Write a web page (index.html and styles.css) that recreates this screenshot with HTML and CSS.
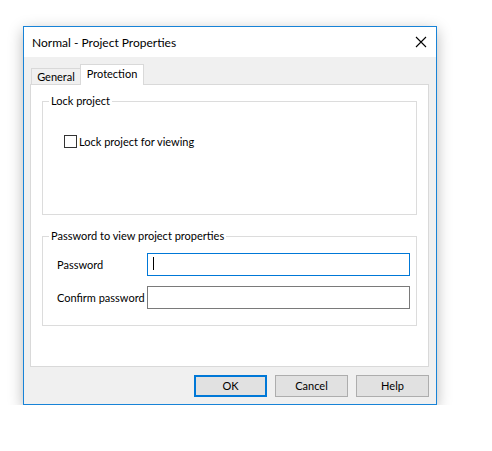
FILE: index.html
```html
<!DOCTYPE html>
<html>
<head>
<meta charset="utf-8">
<link rel="stylesheet" href="styles.css">
</head>
<body>
<div class="window">
  <div class="titlebar">
    <span class="title">Normal - Project Properties</span>
    <svg class="close" width="12" height="12" viewBox="0 0 12 12"><path d="M1 1 L11 11 M11 1 L1 11" stroke="#000" stroke-width="1.1" fill="none"/></svg>
  </div>
  <div class="body">
    <div class="tabs">
      <div class="tab">General</div>
      <div class="tab active">Protection</div>
    </div>
    <div class="panel">
      <fieldset class="group lock">
        <legend>Lock project</legend>
        <label class="check"><span class="box"></span>Lock project for viewing</label>
      </fieldset>
      <fieldset class="group pass">
        <legend>Password to view project properties</legend>
        <div class="row"><span class="lbl">Password</span><div class="input focused"><span class="caret"></span></div></div>
        <div class="row"><span class="lbl">Confirm password</span><div class="input"></div></div>
      </fieldset>
    </div>
    <div class="buttons">
      <div class="btn default">OK</div>
      <div class="btn">Cancel</div>
      <div class="btn">Help</div>
    </div>
  </div>
</div>
</body>
</html>
```
FILE: styles.css
```css
html, body { margin: 0; padding: 0; background: #fff; }
body { font-family: "Lato", "Liberation Sans", sans-serif; font-size: 11px; color: #000; }
.window {
  margin: 26px 0 0 23px;
  width: 412px;
  height: 377px;
  border: 1px solid #1883d7;
  box-shadow: 0 4px 14px rgba(0,0,0,0.28);
  display: flex;
  flex-direction: column;
  background: #f0f0f0;
}
.titlebar {
  height: 30px;
  background: #fff;
  display: flex;
  align-items: center;
  padding: 0 9px 0 8px;
  flex: none;
}
.title { flex: 1; font-size: 12px; }
.close { display: block; }
.body {
  flex: 1;
  padding: 7px 7px 0 6px;
  display: flex;
  flex-direction: column;
}
.tabs { display: flex; align-items: flex-end; height: 20px; padding-left: 1px; position: relative; z-index: 1; }
.tab {
  width: 48px;
  height: 15px;
  line-height: 16px;
  text-align: center;
  border: 1px solid #d9d9d9;
  border-bottom: none;
  border-right: none;
  background: #f0f0f0;
}
.tab.active {
  width: 62px;
  height: 20px;
  line-height: 18px;
  background: #fff;
  border-right: 1px solid #d9d9d9;
  margin-bottom: -1px;
}
.panel {
  height: 283px;
  background: #fff;
  border: 1px solid #d9d9d9;
  padding: 9px 11px 0 11px;
  box-sizing: border-box;
  display: flex;
  flex-direction: column;
  gap: 14px;
}
.group {
  margin: 0;
  border: 1px solid #dcdcdc;
  padding: 0;
  min-width: 0;
}
.group legend { padding: 0 2px; margin-left: 6px; line-height: 14px; }
.lock { height: 119px; }
.check { display: flex; align-items: center; margin: 27px 0 0 21px; gap: 2px; }
.box { width: 11px; height: 11px; border: 1px solid #333; background: #fff; }
.pass { height: 85px; padding: 10px 6px 0 14px; display: flex; flex-direction: column; gap: 10px; }
.pass legend { margin-left: -8px; }
.row { display: flex; align-items: center; }
.lbl { width: 90px; white-space: nowrap; }
.input { width: 261px; height: 21px; border: 1px solid #7a7a7a; background: #fff; position: relative; }
.input.focused { border-color: #0078d7; }
.caret { position: absolute; left: 5px; top: 3px; width: 1px; height: 13px; background: #000; }
.buttons { display: flex; justify-content: flex-end; gap: 8px; padding-top: 8px; }
.btn {
  width: 71px;
  height: 20px;
  line-height: 20px;
  text-align: center;
  border: 1px solid #adadad;
  background: #e1e1e1;
}
.btn.default { border: 2px solid #0078d7; width: 69px; height: 18px; line-height: 18px; }
```
